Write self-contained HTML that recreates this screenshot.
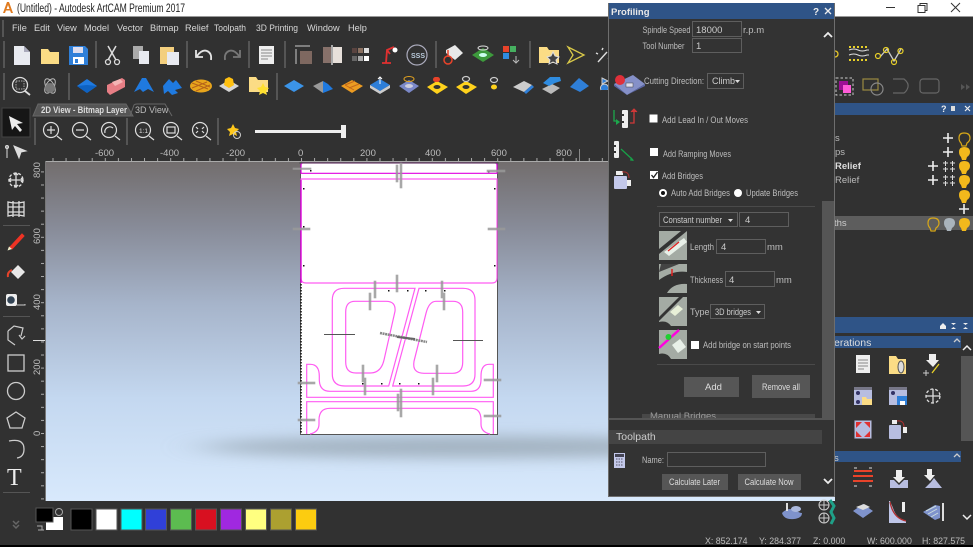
<!DOCTYPE html>
<html><head><meta charset="utf-8"><style>
html,body{margin:0;padding:0;background:#313131}
svg{display:block}
text{font-family:"Liberation Sans",sans-serif;fill:#c8c8c8;font-size:9.500px}
.m{fill:#d8d8d8;font-size:9.200px}
.l{fill:#bdbdbd;font-size:9.500px}
.s{fill:#bdbdbd;font-size:8.800px}
.i{fill:#333;stroke:#5e5e5e;stroke-width:1}
.w{fill:none;stroke:#ddd;stroke-width:1.300}
.g{fill:#999;stroke:#999;stroke-width:.6;opacity:.85}
.sep{fill:#555}
.p{fill:none;stroke:#ff5cf2;stroke-width:1.200}
</style></head><body>
<svg width="973" height="547" viewBox="0 0 973 547" xmlns="http://www.w3.org/2000/svg">
<defs>
<linearGradient id="bg" x1="0" y1="0" x2="0" y2="1">
<stop offset="0" stop-color="#726d6d"/><stop offset=".2" stop-color="#888c99"/><stop offset=".42" stop-color="#a6b4ca"/><stop offset=".7" stop-color="#c4d8f0"/><stop offset="1" stop-color="#d8e9fc"/>
</linearGradient>
<filter id="bl" x="-20%" y="-100%" width="140%" height="300%"><feGaussianBlur stdDeviation="22 7"/></filter>
<pattern id="tx" x="301" y="150" width="13.08" height="12" patternUnits="userSpaceOnUse"><rect x="0" y="8" width="1" height="3" fill="#aaa"/></pattern>
<pattern id="ty" x="33" y="433" width="12" height="13.08" patternUnits="userSpaceOnUse"><rect x="8" y="0" width="3" height="1" fill="#aaa"/></pattern>
</defs>
<rect width="973" height="547" fill="#313131"/>
<!-- title bar -->
<rect width="973" height="16" fill="#fff"/><rect y="16" width="973" height="1" fill="#999"/>
<path d="M3 13 7 2h2l4 11h-2L8 5l-3 8z M5.500 9h5v1.500h-5z" fill="#e07b20"/>
<text x="17" y="12" style="font-size:11.500px;fill:#222" textLength="168" lengthAdjust="spacingAndGlyphs">(Untitled) - Autodesk ArtCAM Premium 2017</text>
<path d="M886 7.500h9" stroke="#333" fill="none"/>
<path d="M918 5.500h7v7h-7z M920 5.500v-2h7v7h-2" stroke="#333" fill="none"/>
<path d="M951 3l9 9M960 3l-9 9" stroke="#333" fill="none"/>
<!-- menu -->
<rect x="2" y="20" width="2" height="17" fill="#555"/>
<text class="m" y="31" x="12">File</text><text class="m" y="31" x="34">Edit</text><text class="m" y="31" x="57">View</text><text class="m" y="31" x="84">Model</text><text class="m" y="31" x="117">Vector</text><text class="m" y="31" x="150">Bitmap</text><text class="m" y="31" x="185">Relief</text><text class="m" y="31" x="214" textLength="32" lengthAdjust="spacingAndGlyphs">Toolpath</text><text class="m" y="31" x="256" textLength="42" lengthAdjust="spacingAndGlyphs">3D Printing</text><text class="m" y="31" x="307">Window</text><text class="m" y="31" x="348">Help</text>
<!-- separators -->
<g class="sep"><rect x="3" y="41" width="2" height="27"/><rect x="95" y="41" width="2" height="27"/><rect x="186" y="41" width="2" height="27"/><rect x="248" y="41" width="2" height="27"/><rect x="284" y="41" width="2" height="27"/><rect x="435" y="41" width="2" height="27"/><rect x="529" y="41" width="2" height="27"/>
<rect x="3" y="73" width="2" height="27"/><rect x="68" y="73" width="2" height="27"/><rect x="276" y="73" width="2" height="27"/>
<rect x="34" y="118" width="2" height="27"/><rect x="126" y="118" width="2" height="27"/><rect x="217" y="118" width="2" height="27"/></g>
<!-- toolbar row1 -->
<path d="M14 46h10l6 6v13H14z" fill="#e8eaf0"/><path d="M24 46v6h6z" fill="#aab"/>
<path d="M41 49h7l2 3h9v12H41z" fill="#fbdc85"/>
<path d="M69 46h16l3 3v16H69z" fill="#2f7fd8"/><rect x="73" y="47" width="10" height="6" fill="#dde"/><rect x="73" y="57" width="11" height="7" fill="#fff"/><rect x="75" y="59" width="3" height="4" fill="#2f7fd8"/>
<path d="M108 46l8 14M116 46l-8 14" stroke="#ddd" stroke-width="1.500" fill="none"/><circle cx="108" cy="62" r="2.500" class="w"/><circle cx="117" cy="62" r="2.500" class="w"/>
<rect x="133" y="46" width="10" height="13" fill="#aaa"/><rect x="139" y="51" width="10" height="13" fill="#e8eaf0"/>
<rect x="160" y="47" width="14" height="17" fill="#f3cf7e"/><rect x="167" y="52" width="12" height="13" fill="#e8eaf0"/>
<path d="M196 50v7h7M197 56q5-7 10-5 5 2 4 9" stroke="#e4e4e4" stroke-width="1.800" fill="none"/>
<path d="M240 50v7h-7M239 56q-5-7-10-5-5 2-4 9" stroke="#777" stroke-width="1.800" fill="none"/>
<rect x="259" y="46" width="15" height="18" fill="#eee"/><path d="M261 50h11M261 53h11M261 56h11M261 59h7" stroke="#888"/>
<rect x="300" y="51" width="12" height="13" fill="#7e6860"/><path d="M295 46h15M296 49v15" stroke="#ccc" fill="none"/>
<rect x="323" y="47" width="9" height="16" fill="#87716a"/><rect x="333" y="47" width="9" height="16" fill="#e7e0da"/><rect x="331" y="45" width="2" height="20" fill="#aaa"/>
<g><rect x="352" y="48" width="5" height="5" fill="#5a4440"/><rect x="358" y="48" width="5" height="5" fill="#8a7060"/><rect x="364" y="48" width="5" height="5" fill="#ddd"/><rect x="352" y="56" width="5" height="5" fill="#666"/><rect x="358" y="56" width="5" height="5" fill="#aaa"/><rect x="364" y="56" width="5" height="5" fill="#fff"/></g>
<path d="M382 63h9M386 63l1-13 7-3M387 50l3 4" stroke="#e03030" stroke-width="1.800" fill="none"/><circle cx="395" cy="50" r="2.500" fill="#fff"/>
<circle cx="417" cy="55" r="10" fill="none" stroke="#aab" stroke-width="1.200"/><text x="411" y="58" style="font-size:7px;fill:#bcd;font-weight:bold">SSS</text>
<path d="M446 50l9-5 8 8-8 7-9-7z" fill="#e8e8e8"/><circle cx="448" cy="60" r="4" fill="none" stroke="#e8432a" stroke-width="1.500"/><path d="M448 50v7" stroke="#e8432a" stroke-width="1.500"/>
<path d="M472 55l11-7 11 7-11 7z" fill="#3d9a3c"/><ellipse cx="483" cy="48" rx="5" ry="2" fill="none" stroke="#ddd"/><ellipse cx="483" cy="55" rx="4" ry="2" fill="#cfe"/>
<rect x="503" y="46" width="6" height="6" fill="#e8432a"/><rect x="510" y="46" width="6" height="6" fill="#46b060"/><rect x="503" y="53" width="6" height="6" fill="#2f8be0"/><path d="M516 56v7M513 60l3 3 3-3" stroke="#bbb" fill="none"/>
<path d="M539 47h8l2 3h10v13h-20z" fill="#fbdc85"/><path d="M553 52l2 4 4 1-3 3 1 4-4-2-4 2 1-4-3-3 4-1z" fill="#444" stroke="#ddd"/>
<path d="M568 47l16 8-16 8 5-8z" fill="none" stroke="#d8c848" stroke-width="1.300"/>
<path d="M598 62l9-10M602 50l1-2M608 58l2 1M596 53l2 1" stroke="#ddd" stroke-width="1.400"/>
<!-- toolbar row2 -->
<circle cx="20" cy="85" r="7.500" class="w"/><rect x="16" y="81" width="8" height="8" fill="none" stroke="#aaa" stroke-dasharray="1.500 1"/><path d="M25 91l5 4" stroke="#ddd" stroke-width="1.800"/>
<ellipse cx="50" cy="86" rx="8" ry="4" fill="none" stroke="#bbb" transform="rotate(60 50 86)"/><ellipse cx="50" cy="86" rx="8" ry="4" fill="none" stroke="#bbb" transform="rotate(-60 50 86)"/><circle cx="50" cy="88" r="5" fill="#777"/>
<path d="M77 86l10-7 10 7-10 7z" fill="#1f7ae0"/><path d="M77 86l10-1 10 1-10 7z" fill="#0e62c2"/>
<path d="M107 85l15-7 3 2v7l-15 8-3-3z" fill="#e77e85"/><path d="M112 82l8-3 3 3-8 4z" fill="#f4b4b4"/>
<path d="M134 92l8-14 4 0 8 14-6-3-5 3-3-3z" fill="#1f7ae0"/>
<path d="M163 86l6-7 4 4 3-3 6 8-7 2 3 3-6 2-4-4-4 3z" fill="#1f7ae0"/>
<ellipse cx="201" cy="86" rx="11" ry="6.500" fill="#e8a51c"/><path d="M192 83l16 6M196 81l14 6M192 88l15-6M196 91l14-6" stroke="#b5621a" fill="none"/>
<path d="M219 86l10-6 10 6-10 6z" fill="#d5d5d5"/><path d="M225 79l4-2 4 2 1 6-5 3-5-3z" fill="#ffc010"/>
<path d="M249 77h7l2 3h10v12h-19z" fill="#fbdc85"/><path d="M263 83l2 4 4 1-3 3 1 4-4-2-4 2 1-4-3-3 4-1z" fill="#ffe030"/>
<path d="M284 86l10-6 10 6-10 6z" fill="#3b94e8"/>
<path d="M313 86l10-5v12z" fill="#999"/><path d="M323 81l5 3 5 5-10 4z" fill="#1f7ae0"/>
<path d="M341 86l11-6 11 6-11 7z" fill="#ec9c22"/><path d="M345 85l10-4M349 88l10-4M345 85l9 5" stroke="#c4681a" fill="none"/>
<path d="M370 85l10-6 10 6-10 6z" fill="#2d7ed8"/><path d="M370 88l10 6 10-6v-3l-10 6-10-6z" fill="#ccc"/><path d="M380 84v-7M378 79l2-2 2 2" stroke="#fff" fill="none"/>
<path d="M399 86l10-6 10 6-10 7z" fill="#7b88c8"/><ellipse cx="409" cy="79" rx="5" ry="2.500" fill="none" stroke="#e0a020"/><ellipse cx="409" cy="86" rx="4" ry="2" fill="#ccd"/>
<path d="M427 87l10-6 11 6-11 7z" fill="#ffd21c"/><ellipse cx="437" cy="87" rx="3.500" ry="2" fill="#333"/><rect x="433" y="77" width="7" height="5" rx="2.500" fill="#e8432a"/>
<path d="M456 87l10-6 11 6-11 7z" fill="#ffd21c"/><ellipse cx="466" cy="87" rx="3.500" ry="2" fill="#333"/><ellipse cx="466" cy="79" rx="3.500" ry="2.500" fill="none" stroke="#ccc" stroke-width="1.200"/>
<ellipse cx="494" cy="80" rx="3.500" ry="2.500" fill="none" stroke="#ccc" stroke-width="1.200"/><ellipse cx="494" cy="87" rx="3" ry="2.500" fill="#ffd21c"/>
<path d="M513 87l11-6 8 4-8 7z" fill="#ccc"/><path d="M524 92l8-7 2 2-8 7z" fill="#2f7fd8"/>
<path d="M542 89l10-5 8 4-9 6z" fill="#bbb"/><path d="M543 83l7-6h10l1 4-6 2-6 3z" fill="#2f8ce0"/>
<path d="M570 87l9-9 10 8-9 6z" fill="#2f7fd8"/>
<path d="M602 78l6 3-6 3z M601 90a4 4 0 1 1 7 0" fill="#2f7fd8" stroke="#ccc"/>
<!-- tabs -->
<path d="M33 116l5-12h88l7 12z" fill="#555" stroke="#666"/>
<text x="41" y="113" style="font-size:9px;fill:#ddd;font-weight:bold" textLength="86" lengthAdjust="spacingAndGlyphs">2D View - Bitmap Layer</text>
<path d="M130 116l4-11q1-1 3-1h28l7 12" fill="none" stroke="#666"/>
<text x="135" y="113" style="font-size:9px;fill:#bbb">3D View</text>
<!-- row3 -->
<g fill="none" stroke="#ddd" stroke-width="1.200">
<circle cx="51" cy="130" r="7.500"/><path d="M47 130h8M51 126v8M57 136l5 4"/>
<circle cx="80" cy="130" r="7.500"/><path d="M76 130h8M86 136l5 4"/>
<circle cx="109" cy="130" r="7.500"/><path d="M105 133a5 5 0 0 1 8-5M115 136l5 4"/>
<circle cx="143" cy="130" r="7.500"/><path d="M149 136l5 4"/>
<circle cx="171" cy="130" r="7.500"/><rect x="167" y="127" width="8" height="6"/><path d="M177 136l5 4"/>
<circle cx="200" cy="130" r="7.500"/><path d="M196 127l2 2M204 127l-2 2M196 133l2-2M204 133l-2-2M206 136l5 4"/>
</g>
<text x="139" y="133" style="font-size:6.500px;fill:#ddd">1:1</text>
<path d="M233 124l2 4 4 1-3 3 1 4-4-2-4 2 1-4-3-3 4-1z" fill="#ffc81c"/><circle cx="237" cy="135" r="3.500" fill="none" stroke="#ccc"/>
<rect x="255" y="130" width="90" height="3" fill="#eee"/><rect x="341" y="125" width="5" height="13" fill="#eee"/>
<!-- canvas -->
<rect x="45" y="161" width="790" height="340" fill="url(#bg)"/>
<ellipse cx="470" cy="447" rx="270" ry="11" fill="#87959f" opacity=".6" filter="url(#bl)"/>
<!-- rulers -->
<rect x="45" y="150" width="790" height="12" fill="url(#tx)"/>
<rect x="33" y="161" width="12" height="340" fill="url(#ty)"/>
<rect x="45" y="161" width="790" height="1" fill="#aaa"/><rect x="45" y="161" width="1" height="340" fill="#777"/>
<rect x="579" y="149" width="1" height="12" fill="#888"/>
<g><text class="l" x="95" y="156">-600</text><text class="l" x="160" y="156">-400</text><text class="l" x="226" y="156">-200</text><text class="l" x="298" y="156">0</text><text class="l" x="360" y="156">200</text><text class="l" x="425" y="156">400</text><text class="l" x="491" y="156">600</text><text class="l" x="556" y="156">800</text></g>
<g><text class="l" transform="translate(40 178) rotate(-90)">800</text><text class="l" transform="translate(40 244) rotate(-90)">600</text><text class="l" transform="translate(40 310) rotate(-90)">400</text><text class="l" transform="translate(40 375) rotate(-90)">200</text><text class="l" transform="translate(40 436) rotate(-90)">0</text></g>
<rect x="33" y="340" width="12" height="1" fill="#ddd"/>
<!-- sheet -->
<rect x="300.500" y="162.500" width="197" height="272" fill="#fff" stroke="#555"/>
<g class="p">
<path d="M303 163h192q2 0 2 2v8.300H301V165q0-2 2-2z" stroke="#e000e0"/>
<path d="M301 179h196v99q0 5-5 5H306q-5 0-5-5z"/>
<path d="M344 288.300h71L388.700 386H345q-12.700 0-12.700-12V300q0-11.700 11.700-11.700z"/>
<path d="M419 288.300h44q12 0 12 12V374q0 12-12 12H392.700z"/>
<path d="M355 301.300h31q10 0 9 10L384 360q-3 13-14 13h-14q-10.300 0-10.300-11V312q0-10.700 9.300-10.700z"/>
<path d="M436 301.300h17q9.700 0 9.700 11V362q0 11.300-10 11.300H424q-12 0-10-12l12-48q3-12 10-12z"/>
<path d="M306.700 364.300v33h186.600v-33H489q-8 0-8 12v3q0 12-10 12H330q-10.700 0-10.700-12v-3q0-12-9-12z"/>
<path d="M306.700 434v-32.300h186.600V434"/>
<path d="M310 434q9-2 9-10v-4q0-11.700 11-11.700h141q10 0 10 11.700v4q0 8 9 10"/>
</g>
<path d="M301 180v103" stroke="#e000e0" stroke-width="1.300"/>
<path d="M301 284v150" stroke="#111" stroke-width="1.500" stroke-dasharray="1.500 1.500"/>
<path d="M299 163h200" stroke="#555"/>
<g fill="#111"><rect x="303" y="188" width="1.500" height="1.500"/><rect x="303" y="226" width="1.500" height="1.500"/><rect x="303" y="265" width="1.500" height="1.500"/><rect x="494" y="188" width="1.500" height="1.500"/><rect x="494" y="265" width="1.500" height="1.500"/><rect x="310" y="170" width="1.500" height="1.500"/><rect x="488" y="171" width="1.500" height="1.500"/><rect x="388" y="290" width="1.500" height="1.500"/><rect x="407" y="290" width="1.500" height="1.500"/><rect x="425" y="290" width="1.500" height="1.500"/><rect x="444" y="290" width="1.500" height="1.500"/><rect x="362" y="383" width="1.500" height="1.500"/><rect x="381" y="383" width="1.500" height="1.500"/><rect x="399" y="383" width="1.500" height="1.500"/><rect x="418" y="383" width="1.500" height="1.500"/></g>
<g class="g">
<rect x="396" y="165" width="2" height="17"/><rect x="400" y="163" width="2" height="25"/>
<rect x="293" y="168" width="18" height="1.500"/><rect x="487" y="170" width="18" height="2"/>
<rect x="293" y="228" width="17" height="2"/><rect x="488" y="228" width="17" height="2"/>
<rect x="374" y="281" width="2" height="17"/><rect x="396" y="275" width="2" height="17"/><rect x="441" y="281" width="2" height="17"/>
<rect x="369" y="293" width="2" height="17"/><rect x="443" y="293" width="2" height="17"/>
<rect x="362" y="365" width="2" height="17"/><rect x="364" y="378" width="2" height="17"/><rect x="436" y="365" width="2" height="17"/><rect x="432" y="378" width="2" height="17"/>
<rect x="298" y="382" width="17" height="2"/><rect x="298" y="419" width="17" height="2"/><rect x="484" y="379" width="17" height="2"/><rect x="484" y="415" width="17" height="2"/>
<rect x="397" y="394" width="2" height="17"/><rect x="400" y="389" width="2" height="28"/>
</g>
<g fill="#555"><rect x="324" y="334" width="31" height="1"/><rect x="453" y="340" width="30" height="1"/></g>
<path d="M380 333l47 9" stroke="#888" stroke-width="2.500" stroke-dasharray="2 .6"/><path d="M397 337l18 2" stroke="#666" stroke-width="2"/>
<!-- left toolbar -->
<rect x="0" y="161" width="33" height="340" fill="#313131"/>
<rect x="2" y="108" width="28" height="29" fill="#161616" stroke="#444"/>
<path d="M9 116l14 7-6 1 5 6-2 2-5-6-3 4z" fill="#eee"/>
<path d="M7 146v12M14 146l12 5-5 1-2 6z" fill="#ddd" stroke="#ddd"/><circle cx="7" cy="147" r="1.500" fill="none" stroke="#ddd"/>
<circle cx="16" cy="180" r="7" class="w" stroke-dasharray="3 2"/><path d="M16 173v14M9 180h14M14 175l2-2 2 2M14 185l2 2 2-2M11 178l-2 2 2 2M21 178l2 2-2 2" class="w"/>
<path d="M8 202q8 2 16 0v14q-8-2-16 0zM13 201v16M19 201v16M8 207h16M8 212h16" class="w"/>
<rect x="3" y="225" width="27" height="1" fill="#555"/>
<path d="M10 247l12-13 2 2-12 13-2-.5z" fill="#ee3324" stroke="#ee3324"/><path d="M7.500 250.500l1.500-4 3 2.500z" fill="#eec"/>
<path d="M11 272l7-7 7 7-7 7z" fill="#e8e8e8"/><path d="M12 270q-5 2-4 7" stroke="#e8432a" stroke-width="2" fill="none"/>
<rect x="6" y="294" width="11" height="12" rx="2" fill="#eee"/><circle cx="11" cy="300" r="3.800" fill="#345"/><path d="M17 305h8v-1" stroke="#ccc" fill="none"/>
<rect x="3" y="316" width="27" height="1" fill="#555"/>
<path d="M8 331l6-5 9 2-2 8M8 331v9l7 5M19 335l3 4 3-3" fill="none" stroke="#ccc" stroke-width="1.200"/>
<rect x="8" y="355" width="16" height="16" fill="none" stroke="#ccc" stroke-width="1.300"/>
<circle cx="16" cy="391" r="8.500" fill="none" stroke="#ccc" stroke-width="1.300"/>
<path d="M16 412l9 6-3 10H10l-3-10z" fill="none" stroke="#ccc" stroke-width="1.300"/>
<path d="M9 441q15-3 15 8 0 8-7 9" fill="none" stroke="#ccc" stroke-width="1.300"/>
<text x="7" y="485" style="font-family:'Liberation Serif',serif;font-size:24px;fill:#eee">T</text>
<rect x="3" y="492" width="27" height="1" fill="#555"/>
<path d="M13 521l3 3 3-3M13 525l3 3 3-3" stroke="#666" fill="none" stroke-width="1.500"/>
<!-- palette -->
<rect x="46" y="517" width="17" height="13" fill="#fff"/><rect x="36" y="508" width="17" height="14" fill="#000" stroke="#555"/>
<circle cx="59" cy="512" r="3.500" fill="none" stroke="#aaa"/><path d="M37 526h5v4M38 530h6" stroke="#aaa" fill="none"/>
<g stroke="#555" stroke-width="1"><rect x="71" y="509" width="21" height="21" fill="#000"/><rect x="96" y="509" width="21" height="21" fill="#fff"/><rect x="121" y="509" width="21" height="21" fill="#0ff"/><rect x="145.500" y="509" width="21" height="21" fill="#3040d8"/><rect x="170.500" y="509" width="21" height="21" fill="#5cbc50"/><rect x="195.500" y="509" width="21" height="21" fill="#d81020"/><rect x="220.500" y="509" width="21" height="21" fill="#a028e0"/><rect x="245.500" y="509" width="21" height="21" fill="#ffff80"/><rect x="270.500" y="509" width="21" height="21" fill="#aca030"/><rect x="295.500" y="509" width="21" height="21" fill="#fccc10"/></g>
<!-- right panel -->
<rect x="773" y="501" width="200" height="46" fill="#313131"/>
<rect x="835" y="17" width="138" height="484" fill="#313131"/>
<circle cx="835" cy="54" r="3" fill="none" stroke="#e8c828" stroke-width="1.300"/>
<path d="M849 50q5-2 9 0t9 0h2M849 55q5-2 9 0t9 0h2" stroke="#ddd" fill="none"/><path d="M849 47h20M849 60h20" stroke="#e8d028" stroke-width="2" stroke-dasharray="2 2"/>
<path d="M880 57l7-8 7 12 7-12" fill="none" stroke="#ccc" stroke-width="1.300"/><g fill="none" stroke="#e8d028" stroke-width="1.200"><circle cx="878" cy="56" r="2.500"/><circle cx="886" cy="50" r="2.500"/><circle cx="894" cy="62" r="2.500"/><circle cx="900.500" cy="51" r="2.500"/></g>
<rect x="836" y="78" width="17" height="17" fill="none" stroke="#ccc" stroke-dasharray="2.500 2"/><rect x="839" y="81" width="9" height="9" fill="#9e0f96"/><rect x="843" y="85" width="8" height="8" fill="#ff5cd8"/>
<rect x="863" y="79" width="15" height="11" fill="none" stroke="#9a8a40" stroke-width="1.200"/><circle cx="877" cy="89" r="6" fill="none" stroke="#888" stroke-width="1.200"/>
<path d="M893 79h11q5 4 4 8t-4 6h-11" fill="none" stroke="#666" stroke-width="1.200"/>
<rect x="920" y="79" width="19" height="14" rx="3" fill="none" stroke="#666" stroke-width="1.200"/>
<path d="M961 84l4 3-4 3zM966 84l4 3-4 3z" fill="#555"/>
<rect x="834" y="103" width="139" height="12" fill="#2f5487"/>
<text x="941" y="112" style="fill:#eee;font-weight:bold;font-size:9px">?</text><rect x="951" y="106" width="4" height="5" fill="#ddd"/><path d="M965 106l5 5M970 106l-5 5" stroke="#eee" stroke-width="1.200"/>
<text x="835" y="141" style="fill:#bbb">s</text><text x="835" y="155" style="fill:#bbb">ps</text><text x="835" y="169" style="fill:#ddd;font-weight:bold">Relief</text><text x="835" y="183" style="fill:#bbb">Relief</text>
<rect x="834" y="216" width="139" height="14" fill="#5d5d5d"/><text x="834" y="226" style="fill:#ccc">ths</text>
<g stroke="#eee" stroke-width="1.600" fill="none"><path d="M943 138h10M948 133v10M943 152h10M948 147v10M928 166h10M933 161v10M928 180h10M933 175v10M959 209h10M964 204v10"/></g>
<g stroke="#ddd" fill="none"><path d="M943 163h5M945.500 161v5M950 163h5M952.500 161v5M943 169h5M945.500 167v5M950 169h5M952.500 167v5M943 177h5M945.500 175v5M950 177h5M952.500 175v5M943 183h5M945.500 181v5M950 183h5M952.500 181v5"/></g>
<g fill="#f2b91c"><path d="M959 152q0-5 5-5 6 0 6 5 0 3-3 5l-1 3h-4l-1-3q-2-2-2-5z"/><path d="M959 166q0-5 5-5 6 0 6 5 0 3-3 5l-1 3h-4l-1-3q-2-2-2-5z"/><path d="M959 180q0-5 5-5 6 0 6 5 0 3-3 5l-1 3h-4l-1-3q-2-2-2-5z"/><path d="M959 195q0-5 5-5 6 0 6 5 0 3-3 5l-1 3h-4l-1-3q-2-2-2-5z"/><path d="M959 223q0-5 5-5 6 0 6 5 0 3-3 5l-1 3h-4l-1-3q-2-2-2-5z"/></g>
<path d="M959 138q0-5 5-5 6 0 6 5 0 3-3 5l-1 3h-4l-1-3q-2-2-2-5z" fill="none" stroke="#d8a818" stroke-width="1.200"/>
<path d="M928 223q0-5 5-5 6 0 6 5 0 3-3 5l-1 3h-4l-1-3q-2-2-2-5z" fill="none" stroke="#d8a818" stroke-width="1.200"/>
<path d="M944 223q0-5 5-5 6 0 6 5 0 3-3 5l-1 3h-4l-1-3q-2-2-2-5z" fill="#aab4bc"/>
<rect x="834" y="317" width="139" height="16" fill="#2f5487"/>
<path d="M940 326l3-3 3 3v3h-6zM951 323h5l-2.500 2zM951 329h5l-2.500-2zM963 323h5l-2.500 2zM963 329h5l-2.500-2z" fill="#eee"/>
<rect x="834" y="336" width="127" height="12" fill="#2f5487"/><text x="834" y="346" style="font-size:10.500px;fill:#ddd">erations</text>
<path d="M954 342l3-3 3 3" stroke="#ccc" fill="none" stroke-width="1.300"/>
<rect x="834" y="451" width="127" height="11" fill="#2f5487"/><text x="834" y="461" style="fill:#ccc">s</text><path d="M954 457l3-3 3 3" stroke="#ccc" fill="none" stroke-width="1.300"/>
<path d="M963 350l4-4 4 4" stroke="#eee" fill="none" stroke-width="1.500"/>
<rect x="961" y="356" width="12" height="85" fill="#555"/>
<path d="M963 515l4 4 4-4" stroke="#eee" fill="none" stroke-width="1.500"/>
<rect x="856" y="355" width="14" height="18" fill="#eee"/><path d="M858 360h10M858 363h10M858 366h10M858 369h6" stroke="#888"/>
<path d="M889 356h7l2 3h8v15h-17z" fill="#fbdc85"/><ellipse cx="901" cy="367" rx="3" ry="6" fill="#ddd" stroke="#555"/>
<path d="M929 354h7v6h3l-6 7-7-7h3z" fill="#eee"/><path d="M926 370v6M923 373h6" stroke="#ccc"/><path d="M932 373l7-9" stroke="#e8d028" stroke-width="1.300"/>
<g><rect x="854" y="387" width="18" height="18" fill="#b7bde0"/><rect x="854" y="387" width="18" height="3" fill="#778"/><circle cx="858" cy="393" r="2" fill="#336"/><circle cx="858" cy="402" r="2" fill="#336"/><path d="M862 397h4l1 2h5v6h-10z" fill="#fbdc85"/></g>
<g><rect x="889" y="387" width="18" height="18" fill="#b7bde0"/><rect x="889" y="387" width="18" height="3" fill="#778"/><circle cx="893" cy="393" r="2" fill="#336"/><rect x="897" y="396" width="10" height="9" fill="#2f7fd8"/><rect x="900" y="401" width="5" height="4" fill="#fff"/></g>
<circle cx="933" cy="396" r="7" class="w" stroke-dasharray="3 2"/><path d="M933 389v14M926 396h14" class="w"/>
<rect x="854.500" y="420.500" width="17" height="18" rx="1" fill="#b7bde0" stroke="#778"/><path d="M856 422h6l-6 6zM870 422h-6l6 6zM856 437h6l-6-6zM870 437h-6l6-6z" fill="#e03030"/>
<rect x="889" y="425" width="12" height="14" rx="1" fill="#b7bde0"/><rect x="892" y="420" width="5" height="4" fill="#eee"/><path d="M897 421q7-1 7 6" stroke="#b03030" fill="none"/><rect x="903" y="427" width="4" height="6" fill="#eee"/>
<path d="M854 471h18M853 476h20M853 481h20" stroke="#e8432a" stroke-width="2"/><path d="M854 468h3M869 468h3M854 486h3M869 486h3" stroke="#ddd"/>
<path d="M890 488h18v-8h-4l-5 5-5-5h-4z" fill="#b7bde0"/><path d="M896 470h6v7h3l-6 6-6-6h3z" fill="#eee"/>
<path d="M925 488h17l-8-10-3 4z" fill="#b7bde0"/><path d="M927 469h5v6h3l-5 6-6-6h3z" fill="#eee"/>
<path d="M782 513q6-6 12-3t8 3q0 5-8 6-10 1-12-6z" fill="#7f93cc"/><path d="M787 503v8" stroke="#ddd" stroke-width="2"/><ellipse cx="796" cy="509" rx="5" ry="3" fill="#aab8dd"/>
<g fill="none" stroke="#ccc"><circle cx="824" cy="505" r="5"/><path d="M819 505h10M824 500v10"/><circle cx="824" cy="518" r="5"/><path d="M819 518h10M824 513v10"/></g><path d="M830 500l4 6-3 6 3 6-3 6" stroke="#1fa088" stroke-width="3" fill="none"/>
<path d="M853 511l10-7 10 7-10 7z" fill="#7f93cc"/><path d="M856 507l8-3 6 3-7 3z" fill="#ddd"/>
<path d="M889 501v22h17v-2q-10-3-13-13l-3-7z" fill="#bfc6e8"/><path d="M890 502q3 16 16 19" stroke="#b03030" fill="none" stroke-width="1.300"/><rect x="902" y="502" width="3" height="10" fill="#eee"/>
<path d="M923 512l12-7 5 1v12l-5 2z" fill="#7f93cc"/><path d="M926 511l10-5M928 514l9-5M931 517l7-4" stroke="#cdd"/><rect x="942" y="503" width="2" height="18" fill="#ddd"/>
<!-- status -->
<g><text class="s" x="705" y="544">X: 852.174</text><text class="s" x="759" y="544">Y: 284.377</text><text class="s" x="813" y="544">Z: 0.000</text><text class="s" x="867" y="544">W: 600.000</text><text class="s" x="922" y="544">H: 827.575</text></g>
<rect y="545" width="973" height="2" fill="#000"/>
<!-- dialog -->
<rect x="608.500" y="3.500" width="226" height="493" fill="#333" stroke="#6e6e6e"/>
<rect x="609" y="3" width="225" height="16" fill="#2f5487"/>
<text x="611" y="15" style="font-size:9.500px;font-weight:bold;fill:#e8e8e8">Profiling</text>
<text x="813" y="15" style="font-size:10px;font-weight:bold;fill:#eee">?</text>
<path d="M825 8l6 6M831 8l-6 6" stroke="#eee" stroke-width="1.300"/>
<text class="l" x="642.500" y="33" textLength="48" lengthAdjust="spacingAndGlyphs">Spindle Speed</text><rect class="i" x="692.500" y="21.500" width="49" height="15"/><text x="696" y="33" style="fill:#ccc">18000</text><text class="l" x="743" y="33">r.p.m</text>
<text class="l" x="642.500" y="49" textLength="42" lengthAdjust="spacingAndGlyphs">Tool Number</text><rect class="i" x="692.500" y="38.500" width="49" height="14"/><text x="696" y="49" style="fill:#ccc">1</text>
<path d="M824 37l4-4 4 4" stroke="#eee" fill="none" stroke-width="1.800"/>
<path d="M614 84l19-9 12 9-18 11z" fill="#8590c8"/><path d="M614 84l13 11 18-11v2l-18 9-13-9z" fill="#5c68a8"/><circle cx="620" cy="80" r="5" fill="#e0303a"/><rect x="626" y="83" width="7" height="4" fill="#dde" stroke="#444" stroke-width=".5"/>
<text class="l" x="644" y="84" textLength="60" lengthAdjust="spacingAndGlyphs">Cutting Direction:</text><rect class="i" x="707.500" y="73.500" width="36" height="15"/><text x="712" y="84" style="fill:#ccc;font-size:9px">Climb</text><path d="M735 80h5l-2.500 3z" fill="#ddd"/>
<path d="M614 110v11h2" stroke="#1ca84c" stroke-width="1.300" fill="none"/><path d="M616 119l4 3-4 3z" fill="#1ca84c"/><rect x="622" y="110" width="6" height="18" rx="1" fill="#eee"/><path d="M622 115h2M622 122h2" stroke="#333" stroke-width="2"/><path d="M630 123h4v-12" stroke="#d03838" stroke-width="1.300" fill="none"/><path d="M631 112l3-3 3 3" fill="#d03838" stroke="#d03838"/>
<rect x="649.500" y="114.500" width="8" height="8" fill="#fff"/><text class="l" x="662" y="123" textLength="86" lengthAdjust="spacingAndGlyphs">Add Lead In / Out Moves</text>
<rect x="614" y="141" width="5" height="17" rx="1" fill="#eee"/><path d="M614 146h2M614 152h2" stroke="#333" stroke-width="2"/><path d="M621 149l12 11" stroke="#18a048" stroke-width="1.300"/><path d="M631 157l3 4-4-.5z" fill="#18a048"/>
<rect x="650" y="148" width="8" height="8" fill="#fff"/><text class="l" x="663" y="157" textLength="68" lengthAdjust="spacingAndGlyphs">Add Ramping Moves</text>
<rect x="614" y="176" width="13" height="13" rx="1" fill="#c3c8ea"/><rect x="616" y="171" width="7" height="4" fill="#eee"/><path d="M622 172q7-1 7 6" stroke="#b03030" fill="none"/><rect x="627" y="180" width="4" height="6" fill="#eee"/>
<rect x="650" y="171" width="8" height="8" fill="#fff"/><path d="M651.500 175l2 2.500 4-5.500" stroke="#222" stroke-width="1.300" fill="none"/><text class="l" x="662" y="179" textLength="41" lengthAdjust="spacingAndGlyphs">Add Bridges</text>
<circle cx="663" cy="193" r="4" fill="#fff"/><circle cx="663" cy="193" r="2" fill="#111"/><text class="l" x="671" y="196" textLength="59" lengthAdjust="spacingAndGlyphs">Auto Add Bridges</text>
<circle cx="738" cy="193" r="4" fill="#fff"/><text class="l" x="746" y="196" textLength="52" lengthAdjust="spacingAndGlyphs">Update Bridges</text>
<rect x="657" y="206" width="158" height="1" fill="#4a4a4a"/>
<rect class="i" x="659.500" y="212.500" width="78" height="14"/><text x="663" y="223" style="fill:#ccc" textLength="59" lengthAdjust="spacingAndGlyphs">Constant number</text><path d="M728 219h5l-2.500 3z" fill="#ddd"/>
<rect class="i" x="739.500" y="212.500" width="49" height="14"/><text x="745" y="223" style="fill:#ccc">4</text>
<rect x="822" y="201" width="12" height="219" fill="#555"/>
<!-- bridge thumbs -->
<g>
<rect x="659" y="231" width="28" height="29" fill="#a4aba4"/><path d="M659 249l22-18h6l-28 23z" fill="#333"/><path d="M664 252l20-14 3 4-18 14z" fill="#e8f0e8"/><path d="M668 251l11-9" stroke="#e02020" stroke-width="1.300"/>
<rect x="659" y="264" width="28" height="29" fill="#a4aba4"/><path d="M659 280q14-10 28-8v12q-14-1-20 9h-8z" fill="#333"/><path d="M672 269v7" stroke="#e02020" stroke-width="1.500"/><path d="M661 264l18 0-20 8z" fill="#444"/>
<rect x="659" y="297" width="28" height="29" fill="#a4aba4"/><path d="M659 317l20-20h4l-24 24z" fill="#333"/><path d="M670 312l8-7 5 4-8 7z" fill="#e8f0d8"/><path d="M659 322q8-2 12 4h-12z" fill="#333"/>
<rect x="659" y="330" width="28" height="29" fill="#a4aba4"/><path d="M659 348l20-18" stroke="#ff00e0" stroke-width="2.500"/><circle cx="668.500" cy="337" r="3" fill="#1fd030"/><path d="M672 345l8-6 6 8-8 6z" fill="#e8f0e8"/><path d="M659 354q8-2 12 5h-12z" fill="#333"/>
</g>
<text class="l" x="690" y="250" textLength="24" lengthAdjust="spacingAndGlyphs">Length</text><rect class="i" x="716.500" y="239.500" width="49" height="14"/><text x="721" y="250" style="fill:#ccc">4</text><text class="l" x="767" y="250">mm</text>
<text class="l" x="690" y="283" textLength="33" lengthAdjust="spacingAndGlyphs">Thickness</text><rect class="i" x="725.500" y="271.500" width="49" height="15"/><text x="729" y="283" style="fill:#ccc">4</text><text class="l" x="776" y="283">mm</text>
<text class="l" x="690" y="315" style="font-size:9px">Type</text><rect class="i" x="710.500" y="304.500" width="54" height="14"/><text x="715" y="315" style="fill:#ccc" textLength="36" lengthAdjust="spacingAndGlyphs">3D bridges</text><path d="M756 311h5l-2.500 3z" fill="#ddd"/>
<rect x="691" y="341" width="8" height="8" fill="#fff"/><text class="l" x="703" y="348" textLength="88" lengthAdjust="spacingAndGlyphs">Add bridge on start points</text>
<rect x="657" y="364" width="158" height="1" fill="#4a4a4a"/>
<rect x="684" y="377" width="55" height="20" fill="#565656"/><text x="705" y="390" style="fill:#ddd">Add</text>
<rect x="752" y="375" width="58" height="23" fill="#565656"/><text x="762" y="390" style="fill:#ddd" textLength="38" lengthAdjust="spacingAndGlyphs">Remove all</text>
<rect x="642" y="414" width="173" height="4" fill="#484848"/><text x="650" y="419" style="fill:#999">Manual Bridges</text>
<rect x="609" y="418" width="213" height="2" fill="#555"/>
<rect x="609" y="420" width="225" height="10" fill="#333"/>
<rect x="609" y="430" width="213" height="14" fill="#444"/><text x="616" y="440" style="font-size:10.500px;fill:#ccc">Toolpath</text>
<rect x="614" y="453" width="11" height="15" fill="#c3c8ea"/><rect x="615" y="454" width="9" height="3" fill="#445"/><path d="M616 459h7M616 462h7M616 465h7" stroke="#556" stroke-dasharray="1.500 1"/>
<rect class="i" x="667.500" y="452.500" width="98" height="14"/><text class="l" x="642" y="463" textLength="22" lengthAdjust="spacingAndGlyphs">Name:</text>
<rect x="662" y="474" width="66" height="16" fill="#565656"/><text x="669" y="485" style="fill:#ddd" textLength="51" lengthAdjust="spacingAndGlyphs">Calculate Later</text>
<rect x="738" y="474" width="63" height="16" fill="#565656"/><text x="744.500" y="485" style="fill:#ddd" textLength="49" lengthAdjust="spacingAndGlyphs">Calculate Now</text>
<path d="M824 479l4 4 4-4" stroke="#eee" fill="none" stroke-width="1.800"/>
</svg>
</body></html>
